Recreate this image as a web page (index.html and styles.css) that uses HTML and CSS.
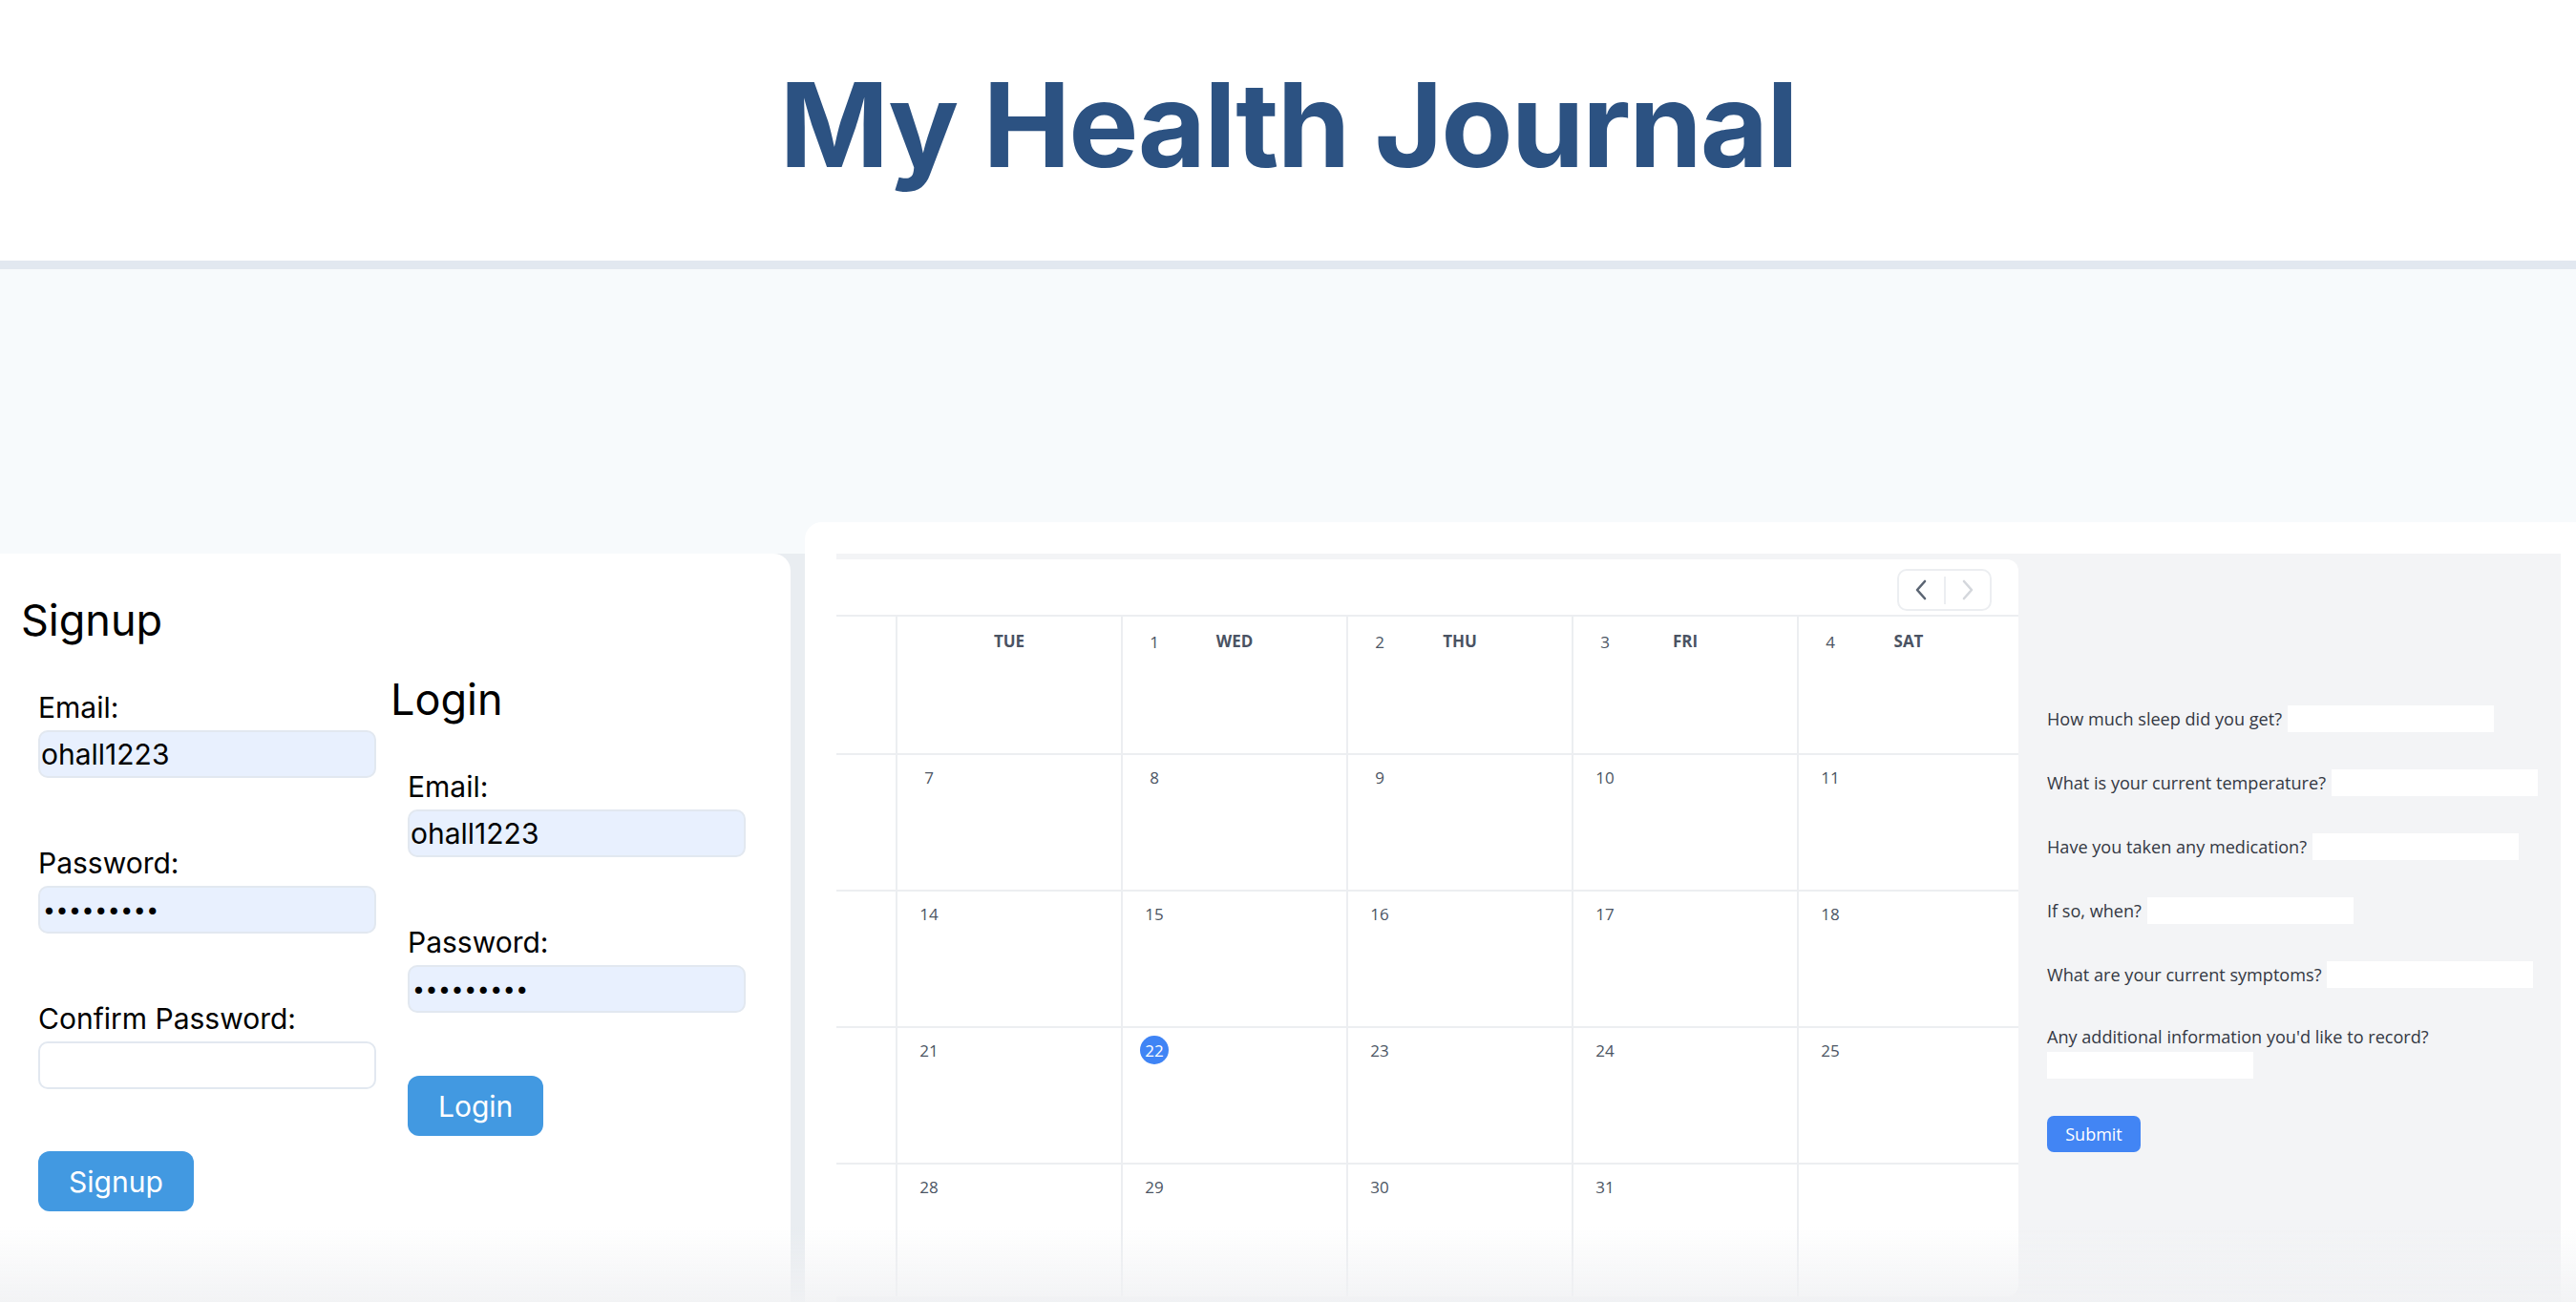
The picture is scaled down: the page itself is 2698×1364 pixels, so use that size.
FILE: index.html
```html
<!DOCTYPE html>
<html lang="en">
<head>
<meta charset="utf-8">
<title>My Health Journal</title>
<link rel="stylesheet" href="styles.css">
</head>
<body>
<header class="site-header">
  <h1 class="site-title">My Health Journal</h1>
</header>
<main class="main">
  <section class="auth-wrap">
    <div class="auth-card">
      <form class="auth-form signup">
        <h2 class="auth-title">Signup</h2>
        <div class="fields">
          <div class="field">
            <label class="field-label">Email:</label>
            <input class="field-input filled" type="text" value="ohall1223">
          </div>
          <div class="field">
            <label class="field-label">Password:</label>
            <input class="field-input filled secret" type="password" value="ohall1223">
          </div>
          <div class="field">
            <label class="field-label">Confirm Password:</label>
            <input class="field-input secret" type="password" value="">
          </div>
          <button class="auth-btn" type="button">Signup</button>
        </div>
      </form>
      <form class="auth-form login">
        <h2 class="auth-title">Login</h2>
        <div class="fields">
          <div class="field">
            <label class="field-label">Email:</label>
            <input class="field-input filled" type="text" value="ohall1223">
          </div>
          <div class="field">
            <label class="field-label">Password:</label>
            <input class="field-input filled secret" type="password" value="ohall1223">
          </div>
          <button class="auth-btn" type="button">Login</button>
        </div>
      </form>
    </div>
  </section>

  <section class="journal-card">
    <div class="journal-inner">
      <div class="calendar">
        <div class="cal-toolbar">
          <div class="cal-nav">
            <button class="cal-nav-btn" type="button" aria-label="Previous">
              <svg width="14" height="22" viewBox="0 0 14 22"><path d="M11 2 L3 11 L11 20" fill="none" stroke="#5b6573" stroke-width="2.6" stroke-linecap="round" stroke-linejoin="round"/></svg>
            </button>
            <span class="cal-nav-divider"></span>
            <button class="cal-nav-btn" type="button" aria-label="Next">
              <svg width="14" height="22" viewBox="0 0 14 22"><path d="M3 2 L11 11 L3 20" fill="none" stroke="#d4d7dc" stroke-width="2.6" stroke-linecap="round" stroke-linejoin="round"/></svg>
            </button>
          </div>
        </div>
        <div class="cal-viewport">
          <div class="cal-grid">
            <div class="cal-cell head"><span class="num"></span><span class="dayname">SUN</span></div>
            <div class="cal-cell head"><span class="num"></span><span class="dayname">MON</span></div>
            <div class="cal-cell head"><span class="num"></span><span class="dayname">TUE</span></div>
            <div class="cal-cell head"><span class="num">1</span><span class="dayname">WED</span></div>
            <div class="cal-cell head"><span class="num">2</span><span class="dayname">THU</span></div>
            <div class="cal-cell head"><span class="num">3</span><span class="dayname">FRI</span></div>
            <div class="cal-cell head"><span class="num">4</span><span class="dayname">SAT</span></div>

            <div class="cal-cell"><span class="num">5</span></div>
            <div class="cal-cell"><span class="num">6</span></div>
            <div class="cal-cell"><span class="num">7</span></div>
            <div class="cal-cell"><span class="num">8</span></div>
            <div class="cal-cell"><span class="num">9</span></div>
            <div class="cal-cell"><span class="num">10</span></div>
            <div class="cal-cell"><span class="num">11</span></div>

            <div class="cal-cell"><span class="num">12</span></div>
            <div class="cal-cell"><span class="num">13</span></div>
            <div class="cal-cell"><span class="num">14</span></div>
            <div class="cal-cell"><span class="num">15</span></div>
            <div class="cal-cell"><span class="num">16</span></div>
            <div class="cal-cell"><span class="num">17</span></div>
            <div class="cal-cell"><span class="num">18</span></div>

            <div class="cal-cell"><span class="num">19</span></div>
            <div class="cal-cell"><span class="num">20</span></div>
            <div class="cal-cell"><span class="num">21</span></div>
            <div class="cal-cell"><span class="num today">22</span></div>
            <div class="cal-cell"><span class="num">23</span></div>
            <div class="cal-cell"><span class="num">24</span></div>
            <div class="cal-cell"><span class="num">25</span></div>

            <div class="cal-cell"><span class="num">26</span></div>
            <div class="cal-cell"><span class="num">27</span></div>
            <div class="cal-cell"><span class="num">28</span></div>
            <div class="cal-cell"><span class="num">29</span></div>
            <div class="cal-cell"><span class="num">30</span></div>
            <div class="cal-cell"><span class="num">31</span></div>
            <div class="cal-cell"><span class="num"></span></div>
          </div>
        </div>
      </div>

      <form class="entry-form">
        <div class="entry-row"><label class="entry-label">How much sleep did you get?</label><input class="entry-input" type="text"></div>
        <div class="entry-row"><label class="entry-label">What is your current temperature?</label><input class="entry-input" type="text"></div>
        <div class="entry-row"><label class="entry-label">Have you taken any medication?</label><input class="entry-input" type="text"></div>
        <div class="entry-row"><label class="entry-label">If so, when?</label><input class="entry-input" type="text"></div>
        <div class="entry-row"><label class="entry-label">What are your current symptoms?</label><input class="entry-input" type="text"></div>
        <div class="entry-row"><label class="entry-label">Any additional information you'd like to record?</label><input class="entry-input" type="text"></div>
        <button class="entry-submit" type="button">Submit</button>
      </form>
    </div>
  </section>
</main>
<div class="page-fade"></div>
</body>
</html>
```

FILE: styles.css
```css
* { box-sizing: border-box; }

html, body {
  margin: 0;
  padding: 0;
}

body {
  background: #f7fafc;
  font-family: "Inter", "Liberation Sans", sans-serif;
  color: #000;
  overflow: hidden;
  height: 1364px;
}

/* ---------- header ---------- */
.site-header {
  height: 282px;
  background: #ffffff;
  border-bottom: 9px solid #e2e8f0;
  display: flex;
  align-items: center;
  justify-content: center;
  padding-bottom: 12px;
}

.site-title {
  margin: 0;
  font-family: "Inter", "Liberation Sans", sans-serif;
  font-weight: 700;
  font-size: 123px;
  line-height: 1;
  letter-spacing: -2px;
  color: #2c5282;
}

/* ---------- main ---------- */
.main {
  display: flex;
  align-items: flex-start;
  padding-top: 265px;
  height: 1082px;
}

.auth-wrap {
  width: 843px;
  flex: none;
  margin-top: 33px;
  padding-right: 15px;
  background: #e9edf1;
  height: 784px;
}

.auth-card {
  height: 100%;
  background: #ffffff;
  border-top-right-radius: 18px;
  display: flex;
  padding-left: 22px;
}

.auth-form {
  flex: none;
}

.signup { width: 387px; padding-top: 42px; }
.login { width: 390px; padding-top: 125px; }

.auth-title {
  margin: 0 0 46px 0;
  font-weight: 400;
  font-size: 45px;
  line-height: 55px;
}

.fields {
  display: flex;
  flex-direction: column;
  align-items: flex-start;
  padding-left: 18px;
}

.field {
  display: flex;
  flex-direction: column;
  gap: 6px;
}

.field + .field { margin-top: 71px; }

.field-label {
  font-size: 30px;
  line-height: 36px;
}

.field-input {
  width: 354px;
  height: 50px;
  border: 2px solid #e2e8f0;
  border-radius: 10px;
  background: #ffffff;
  padding: 0 0 0 1px;
  font-family: "Inter", "Liberation Sans", sans-serif;
  font-size: 30px;
  color: #000;
  outline: none;
}

.field-input.secret {
  font-size: 23px;
  letter-spacing: 0.6px;
  padding-left: 3px;
}

.field-input.filled {
  background: #e8f0fe;
}

.auth-btn {
  margin-top: 65px;
  height: 63px;
  padding: 0 32px;
  border: none;
  border-radius: 12px;
  background: #4299e1;
  color: #ffffff;
  font-family: "Inter", "Liberation Sans", sans-serif;
  font-size: 30px;
}

.login .auth-btn { margin-top: 66px; }

/* ---------- journal card ---------- */
.journal-card {
  flex: 1;
  background: #ffffff;
  border-top-left-radius: 18px;
  padding: 33px 16px 0 33px;
  height: 817px;
}

.journal-inner {
  display: flex;
  background: #f3f4f6;
  height: 784px;
  padding-top: 6px;
  align-items: flex-start;
}

.calendar {
  width: 1238px;
  flex: none;
  background: #ffffff;
  border-radius: 0 12px 12px 0;
  overflow: hidden;
  font-family: "Open Sans", "Noto Sans", sans-serif;
}

.cal-toolbar {
  height: 60px;
  display: flex;
  justify-content: flex-end;
  align-items: flex-start;
  padding: 10px 28px 0 0;
  border-bottom: 2px solid #eceef1;
}

.cal-nav {
  display: flex;
  align-items: center;
  width: 99px;
  height: 44px;
  border: 2px solid #eceef1;
  border-radius: 10px;
}

.cal-nav-btn {
  flex: 1;
  height: 100%;
  border: none;
  background: transparent;
  display: flex;
  align-items: center;
  justify-content: center;
  padding: 0;
}

.cal-nav-divider {
  width: 2px;
  height: 29px;
  background: #eceef1;
}

.cal-viewport {
  display: flex;
  justify-content: flex-end;
  overflow: hidden;
}

.cal-grid {
  flex: none;
  display: grid;
  grid-template-columns: repeat(6, 236px) 232px;
  grid-template-rows: 143px 143px 143px 143px 140px;
}

.cal-cell {
  border-left: 2px solid #eceef1;
  border-top: 2px solid #eceef1;
  padding: 8px 0 0 18px;
}

.cal-grid .cal-cell:nth-child(-n+7) { border-top: none; }

.cal-cell.head {
  display: grid;
  grid-template-columns: 1fr auto 1fr;
  align-items: start;
  padding: 11px 0 0 0;
}

.cal-cell.head .num {
  justify-self: start;
  margin-left: 18px;
}

.num {
  display: inline-flex;
  align-items: center;
  justify-content: center;
  min-width: 30px;
  height: 30px;
  border-radius: 15px;
  font-size: 17px;
  color: #4b5563;
}

.num.today {
  background: #3f84f5;
  color: #ffffff;
}

.dayname {
  line-height: 30px;
  font-size: 17px;
  font-weight: 700;
  color: #4a5363;
}

/* ---------- entry form ---------- */
.entry-form {
  flex: 1;
  display: flex;
  flex-direction: column;
  align-items: flex-start;
  gap: 39px;
  padding: 153px 12px 0 30px;
  font-family: "Open Sans", "Noto Sans", sans-serif;
}

.entry-row {
  display: flex;
  flex-wrap: wrap;
  align-items: center;
  gap: 4px 6px;
}

.entry-label {
  font-size: 18.1px;
  line-height: 24px;
  color: #333843;
}

.entry-input {
  width: 216px;
  height: 28px;
  border: none;
  background: #ffffff;
  outline: none;
}

.entry-submit {
  width: 98px;
  height: 38px;
  border: none;
  border-radius: 7px;
  background: #4285f4;
  color: #ffffff;
  font-family: "Open Sans", "Noto Sans", sans-serif;
  font-size: 18px;
}

/* subtle fade at the bottom of the viewport */
.page-fade {
  position: fixed;
  left: 0;
  right: 0;
  bottom: 0;
  height: 80px;
  background: linear-gradient(to bottom, rgba(240, 241, 243, 0), rgba(240, 241, 243, 0.85));
  pointer-events: none;
}
```
